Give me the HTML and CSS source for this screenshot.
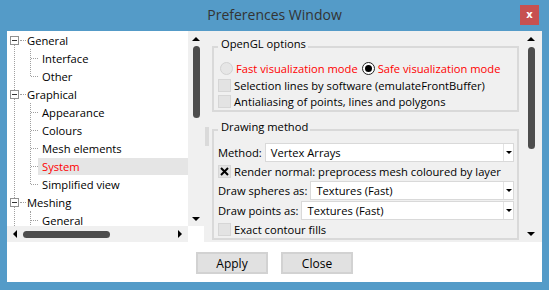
FILE: index.html
```html
<!DOCTYPE html>
<html lang="en">

<head>
    <meta charset="UTF-8" />
    <title>Preferences Window</title>
    <link rel="stylesheet" href="styles.css">
</head>

<body>
    <div class="window">
        <div class="titlebar">
            <span class="title">Preferences Window</span>
            <button class="close-btn">x</button>
        </div>

        <div class="client">
            <div class="panes">
                <!-- category tree -->
                <div class="tree-box">
                    <div class="tree">
                        <div class="node"><span class="toggle"></span><span class="stub"></span><span class="label">General</span></div>
                        <div class="kids">
                            <div class="leaf"><span class="stub"></span><span class="label">Interface</span></div>
                            <div class="leaf"><span class="stub"></span><span class="label">Other</span></div>
                        </div>
                        <div class="node"><span class="toggle"></span><span class="stub"></span><span class="label">Graphical</span></div>
                        <div class="kids">
                            <div class="leaf"><span class="stub"></span><span class="label">Appearance</span></div>
                            <div class="leaf"><span class="stub"></span><span class="label">Colours</span></div>
                            <div class="leaf"><span class="stub"></span><span class="label">Mesh elements</span></div>
                            <div class="leaf selected"><span class="stub"></span><span class="label">System</span></div>
                            <div class="leaf"><span class="stub"></span><span class="label">Simplified view</span></div>
                        </div>
                        <div class="node"><span class="toggle"></span><span class="stub"></span><span class="label">Meshing</span></div>
                        <div class="kids open-end">
                            <div class="leaf"><span class="stub"></span><span class="label">General</span></div>
                        </div>
                    </div>
                    <div class="vscroll">
                        <div class="arrow"><span class="tri-up"></span></div>
                        <div class="track"><span class="thumb tree-thumb"></span></div>
                        <div class="arrow"><span class="tri-down"></span></div>
                    </div>
                    <div class="hscroll">
                        <div class="arrow"><span class="tri-left"></span></div>
                        <div class="track"><span class="thumb"></span></div>
                        <div class="arrow"><span class="tri-right"></span></div>
                    </div>
                    <div class="corner"></div>
                </div>

                <div class="splitter"><span class="grip"></span></div>

                <!-- settings page -->
                <div class="settings">
                    <div class="settings-view">
                        <fieldset class="group">
                            <legend>OpenGL options</legend>
                            <div class="row radio-row">
                                <span class="radio disabled"></span>
                                <span class="red">Fast visualization mode</span>
                                <span class="radio checked"></span>
                                <span class="red">Safe visualization mode</span>
                            </div>
                            <div class="row check-row">
                                <span class="check"></span>
                                <span>Selection lines by software (emulateFrontBuffer)</span>
                            </div>
                            <div class="row check-row">
                                <span class="check"></span>
                                <span>Antialiasing of points, lines and polygons</span>
                            </div>
                        </fieldset>

                        <fieldset class="group drawing">
                            <legend>Drawing method</legend>
                            <div class="row field-row">
                                <span>Method:</span>
                                <div class="combo"><span class="combo-text">Vertex Arrays</span><span class="combo-btn"><span class="tri-small"></span></span></div>
                            </div>
                            <div class="row check-row">
                                <span class="check">
                                    <svg width="9" height="9" viewBox="0 0 9 9"><path d="M1 1L8 8M8 1L1 8" stroke="#000" stroke-width="2" fill="none" /></svg>
                                </span>
                                <span>Render normal: preprocess mesh coloured by layer</span>
                            </div>
                            <div class="row field-row">
                                <span>Draw spheres as:</span>
                                <div class="combo"><span class="combo-text">Textures (Fast)</span><span class="combo-btn"><span class="tri-small"></span></span></div>
                            </div>
                            <div class="row field-row">
                                <span>Draw points as:</span>
                                <div class="combo"><span class="combo-text">Textures (Fast)</span><span class="combo-btn"><span class="tri-small"></span></span></div>
                            </div>
                            <div class="row check-row">
                                <span class="check"></span>
                                <span>Exact contour fills</span>
                            </div>
                        </fieldset>
                    </div>
                    <div class="vscroll wide">
                        <div class="arrow"><span class="tri-up"></span></div>
                        <div class="track"><span class="thumb page-thumb"></span></div>
                        <div class="arrow"><span class="tri-down"></span></div>
                    </div>
                </div>
            </div>

            <div class="buttons">
                <button class="btn">Apply</button>
                <button class="btn">Close</button>
            </div>
        </div>
    </div>
</body>

</html>
```

FILE: styles.css
```css
:root {
    --frame: #549bc8;
    --face: #f0f0f0;
    --line: #a0a0a0;
    --thumb: #4d4d4d;
    --box: #d9d9d9;
}

* {
    margin: 0;
    padding: 0;
    box-sizing: border-box;
}

body {
    width: 549px;
    height: 290px;
    overflow: hidden;
    font-family: 'Open Sans', sans-serif;
    font-size: 11.2px;
    color: #000;
}

.window {
    height: 290px;
    background: var(--frame);
    display: flex;
    flex-direction: column;
}

/* title bar */
.titlebar {
    height: 31px;
    display: grid;
    grid-template-columns: 1fr auto 1fr;
    align-items: start;
}

.title {
    grid-column: 2;
    font-size: 14px;
    line-height: 30px;
    color: #333;
}

.close-btn {
    grid-column: 3;
    justify-self: end;
    width: 19px;
    height: 20px;
    margin: 5px 10px 0 0;
    border: none;
    background: #c75050;
    color: #fff;
    font-family: 'DejaVu Sans', sans-serif;
    font-weight: bold;
    font-size: 10px;
    line-height: 18px;
}

.client {
    flex: 1;
    min-width: 0;
    margin: 0 7px 8px;
    background: #fff;
    display: flex;
    flex-direction: column;
}

.panes {
    height: 211px;
    display: flex;
    background: var(--face);
}

/* tree */
.tree-box {
    width: 197px;
    flex: none;
    display: grid;
    grid-template-columns: 1fr 16px;
    grid-template-rows: 1fr 16px;
}

.tree {
    position: relative;
    background: #fff;
    overflow: hidden;
}

.tree::before {
    content: "";
    position: absolute;
    left: 7px;
    top: 13px;
    bottom: 0;
    border-left: 1px dotted var(--line);
}

.node,
.leaf {
    height: 18px;
    display: flex;
    align-items: center;
    white-space: nowrap;
}

.node {
    padding-left: 3px;
}

.toggle {
    position: relative;
    width: 9px;
    height: 9px;
    border: 1px solid #919191;
    background: #fff;
    display: flex;
    align-items: center;
    justify-content: center;
}

.toggle::after {
    content: "";
    width: 5px;
    height: 1px;
    background: #333;
}

.stub {
    height: 1px;
    border-top: 1px dotted var(--line);
}

.node .stub {
    width: 6px;
    margin-left: 1px;
}

.node .label {
    padding-left: 1px;
}

.kids {
    position: relative;
}

.kids::before {
    content: "";
    position: absolute;
    left: 23px;
    top: 0;
    bottom: 9px;
    border-left: 1px dotted var(--line);
}

.kids.open-end::before {
    bottom: -20px;
}

.leaf {
    padding-left: 24px;
}

.leaf .stub {
    width: 7px;
}

.leaf .label {
    flex: 1;
    height: 17px;
    line-height: 17px;
    padding-left: 4px;
}

.leaf.selected .label {
    background: #e5e5e5;
    color: #ff0000;
}

/* scrollbars */
.vscroll {
    flex: none;
    display: flex;
    flex-direction: column;
    background: var(--face);
}

.vscroll .arrow {
    height: 15px;
    display: flex;
    align-items: center;
    justify-content: center;
}

.vscroll.wide {
    width: 16px;
}

.vscroll.wide .arrow {
    height: 16px;
}

.vscroll .track {
    flex: 1;
    display: flex;
    justify-content: center;
}

.vscroll .thumb {
    width: 7px;
    border-radius: 4px;
    background: var(--thumb);
}

.tree-thumb {
    height: 72px;
}

.page-thumb {
    height: 102px;
}

.hscroll {
    display: flex;
    background: var(--face);
}

.hscroll .arrow {
    width: 16px;
    display: flex;
    align-items: center;
    justify-content: center;
}

.hscroll .track {
    flex: 1;
    display: flex;
    align-items: center;
}

.hscroll .thumb {
    width: 87px;
    height: 7px;
    border-radius: 4px;
    background: var(--thumb);
}

.corner {
    background: #fff;
}

.tri-up,
.tri-down {
    border-left: 4px solid transparent;
    border-right: 4px solid transparent;
}

.tri-up {
    border-bottom: 4px solid #000;
}

.tri-down {
    border-top: 4px solid #000;
}

.tri-left,
.tri-right {
    border-top: 4px solid transparent;
    border-bottom: 4px solid transparent;
}

.tri-left {
    border-right: 4px solid #000;
}

.tri-right {
    border-left: 4px solid #000;
}

.splitter {
    width: 6px;
    flex: none;
    display: flex;
    align-items: center;
    justify-content: center;
}

.grip {
    width: 4px;
    height: 19px;
    background: #dadada;
}

/* settings page */
.settings {
    flex: 1;
    min-width: 0;
    display: flex;
    padding-right: 3px;
}

.settings-view {
    flex: 1;
    min-width: 0;
    overflow: hidden;
    padding: 6px 4px 0 2px;
}

.group {
    border: 2px solid var(--box);
    padding: 2px 3px 1px 4px;
    margin-bottom: 8px;
    min-width: 0;
}

.group legend {
    padding: 0 2px 6px 3px;
    line-height: 14px;
}

.group.drawing {
    padding-bottom: 0;
}

.row {
    display: flex;
    align-items: center;
    gap: 3px;
    white-space: nowrap;
}

.radio-row {
    height: 18px;
}

.check-row {
    height: 16px;
}

.drawing .check-row {
    height: 18px;
}

.field-row {
    height: 20px;
}

.red {
    color: #ff0000;
}

.radio {
    width: 13px;
    height: 13px;
    border-radius: 50%;
    flex: none;
}

.radio.disabled {
    margin-left: 2px;
    background: #e6e6e6;
    border: 1px solid #d2d2d2;
}

.radio.checked {
    margin-left: 1px;
    background: #fff;
    border: 1px solid #222;
    display: flex;
    align-items: center;
    justify-content: center;
}

.radio.checked::after {
    content: "";
    width: 7px;
    height: 7px;
    border-radius: 50%;
    background: #000;
}

.check {
    width: 13px;
    height: 13px;
    flex: none;
    background: #e3e3e3;
    border: 1px solid #d6d6d6;
    display: flex;
    align-items: center;
    justify-content: center;
}

.combo {
    flex: 1;
    min-width: 0;
    height: 19px;
    display: flex;
    background: #fff;
    border: 1px solid #d9d9d9;
}

.combo-text {
    flex: 1;
    padding-left: 5px;
    line-height: 17px;
}

.combo-btn {
    width: 10px;
    border-left: 1px solid #e3e3e3;
    display: flex;
    align-items: center;
    justify-content: center;
}

.tri-small {
    border-left: 3px solid transparent;
    border-right: 3px solid transparent;
    border-top: 3px solid #000;
}

/* dialog buttons */
.buttons {
    flex: 1;
    display: flex;
    justify-content: center;
    align-items: flex-start;
    gap: 13px;
    padding-top: 10px;
}

.btn {
    width: 72px;
    height: 22px;
    background: #e1e1e1;
    border: 2px solid #d2d2d2;
    font-family: 'Open Sans', sans-serif;
    font-size: 12px;
    color: #000;
}
```
